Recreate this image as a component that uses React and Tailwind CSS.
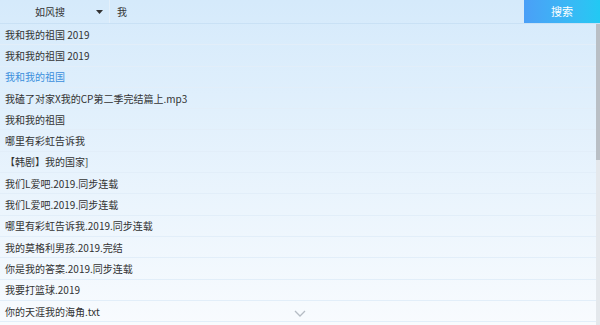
const results = [
  "我和我的祖国 2019",
  "我和我的祖国 2019",
  "我和我的祖国",
  "我磕了对家X我的CP第二季完结篇上.mp3",
  "我和我的祖国",
  "哪里有彩虹告诉我",
  "【韩剧】我的国家]",
  "我们L爱吧.2019.同步连载",
  "我们L爱吧.2019.同步连载",
  "哪里有彩虹告诉我.2019.同步连载",
  "我的莫格利男孩.2019.完结",
  "你是我的答案.2019.同步连载",
  "我要打篮球.2019",
  "你的天涯我的海角.txt",
];

export default function App() {
  return (
    <div
      className="relative w-[600px] h-[325px] overflow-hidden bg-gradient-to-b from-[#d5eafb] to-[#f8fbfe] text-[#333] text-[10px]"
      style={{ fontFamily: '"Noto Sans CJK SC", "Noto Sans", sans-serif' }}
    >
      {/* top bar */}
      <div className="flex h-[24px] items-stretch border-b border-[#c9e1f5]">
        <div className="flex w-[110px] items-center border-r border-[#e3f0fb]">
          <span className="flex-1 text-center pl-[4px]">如风搜</span>
          <svg width="7" height="4" viewBox="0 0 7 4" className="mr-[6px]">
            <path d="M0 0h7L3.5 4z" fill="#333" />
          </svg>
        </div>
        <div className="flex flex-1 items-center pl-[7px]">我</div>
        <button className="w-[76px] bg-gradient-to-r from-[#4a9ff7] to-[#22c9f3] text-white text-[11px]">
          搜索
        </button>
      </div>

      {/* results */}
      <div className="pr-[4px]">
        {results.map((r, i) => (
          <div
            key={i}
            className={`flex h-[21.3px] items-center border-b border-[#e2eef9] pl-[5px] ${
              i === 2 ? "text-[#3b8fdc]" : ""
            }`}
          >
            {r}
          </div>
        ))}
      </div>

      {/* scrollbar */}
      <div className="absolute right-0 top-[24px] bottom-0 w-[4px] bg-[#e4e8ec]">
        <div className="h-[136px] bg-[#b9bfc5]" />
      </div>

      {/* more chevron */}
      <svg
        width="12"
        height="7"
        viewBox="0 0 12 7"
        className="absolute left-[294px] top-[310px]"
      >
        <path d="M1 1l5 5 5-5" fill="none" stroke="#b5bcc4" strokeWidth="1.3" />
      </svg>
    </div>
  );
}
